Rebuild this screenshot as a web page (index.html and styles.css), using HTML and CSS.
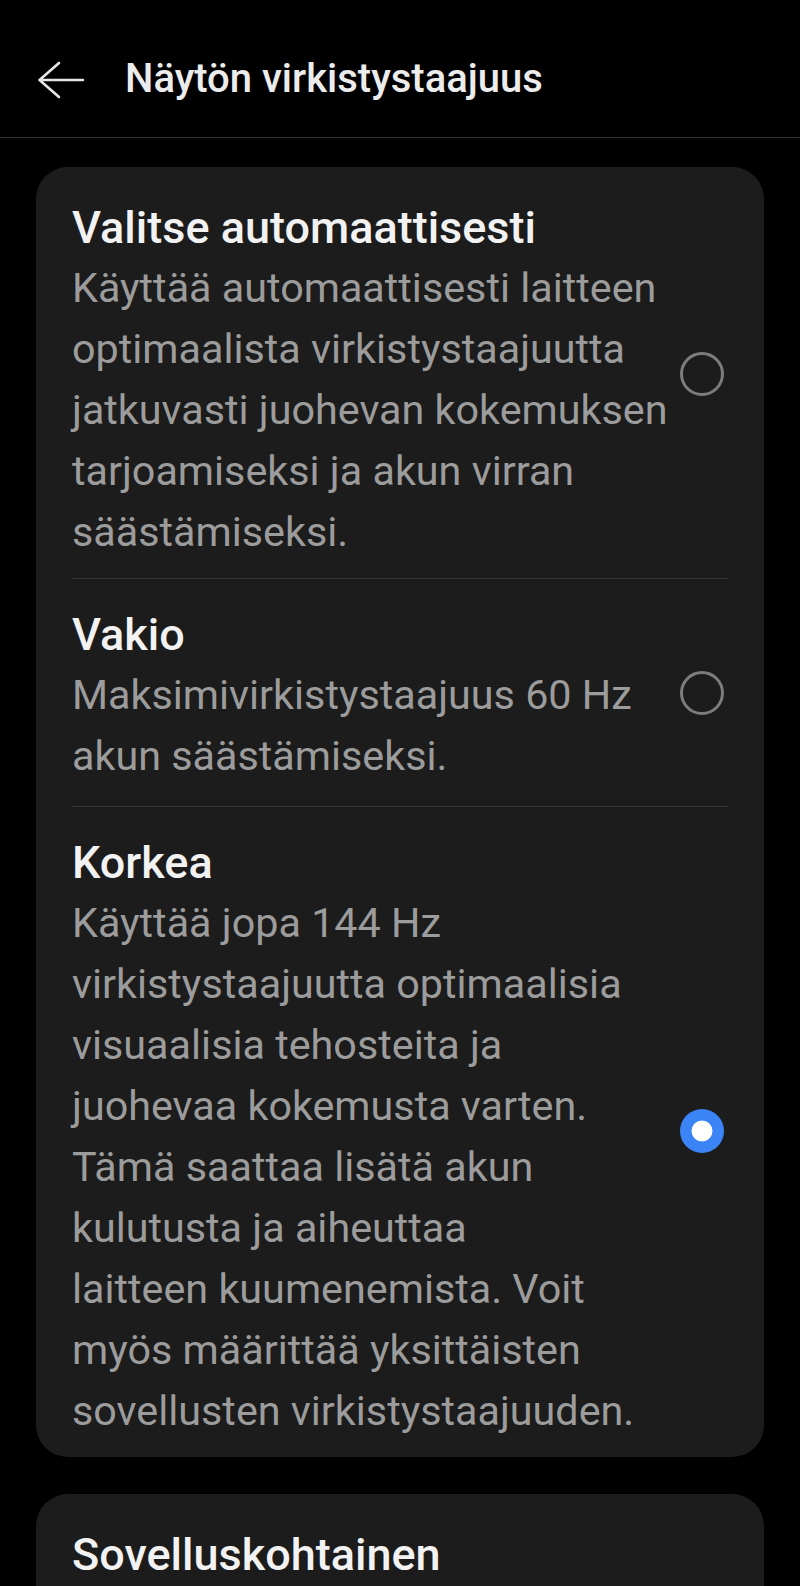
FILE: index.html
```html
<!DOCTYPE html>
<html lang="fi">
<head>
<meta charset="utf-8">
<title>Näytön virkistystaajuus</title>
<link rel="stylesheet" href="styles.css">
</head>
<body>
<header class="appbar">
  <svg class="back" width="48" height="38" viewBox="0 0 48 38" aria-hidden="true">
    <path d="M46 19H2.5M22 2L2.5 19L22 36" fill="none" stroke="#e6e6e6" stroke-width="2.6" stroke-linecap="round" stroke-linejoin="round"/>
  </svg>
  <h1 class="appbar-title">Näytön virkistystaajuus</h1>
</header>

<main class="content">
  <section class="card">
    <div class="option">
      <div class="option-text">
        <div class="option-title">Valitse automaattisesti</div>
        <div class="option-desc">Käyttää automaattisesti laitteen<br>optimaalista virkistystaajuutta<br>jatkuvasti juohevan kokemuksen<br>tarjoamiseksi ja akun virran<br>säästämiseksi.</div>
      </div>
      <span class="radio radio-raised"></span>
    </div>
    <div class="option option-short">
      <div class="option-text">
        <div class="option-title">Vakio</div>
        <div class="option-desc">Maksimivirkistystaajuus 60 Hz<br>akun säästämiseksi.</div>
      </div>
      <span class="radio radio-short"></span>
    </div>
    <div class="option">
      <div class="option-text">
        <div class="option-title">Korkea</div>
        <div class="option-desc">Käyttää jopa 144 Hz<br>virkistystaajuutta optimaalisia<br>visuaalisia tehosteita ja<br>juohevaa kokemusta varten.<br>Tämä saattaa lisätä akun<br>kulutusta ja aiheuttaa<br>laitteen kuumenemista. Voit<br>myös määrittää yksittäisten<br>sovellusten virkistystaajuuden.</div>
      </div>
      <span class="radio radio-checked radio-raised"></span>
    </div>
  </section>

  <section class="card card-second">
    <div class="option">
      <div class="option-text">
        <div class="option-title">Sovelluskohtainen</div>
      </div>
    </div>
  </section>
</main>
</body>
</html>
```

FILE: styles.css
```css
* {
  box-sizing: border-box;
}

html, body {
  margin: 0;
  padding: 0;
  background: #000;
}

body {
  font-family: Roboto, "Noto Sans", "Liberation Sans", sans-serif;
  color: #f2f2f2;
  overflow: hidden;
  height: 1586px;
}

.appbar {
  height: 138px;
  display: flex;
  align-items: center;
  padding: 22px 0 0 37px;
  border-bottom: 1px solid #333;
}

.back {
  display: block;
  flex: none;
}

.appbar-title {
  margin: 0 0 0 40px;
  font-size: 40px;
  font-weight: 500;
  line-height: 1.171;
  color: #ececec;
}

.content {
  padding: 29px 36px 0;
}

.card {
  background: #1c1c1c;
  border-radius: 32px;
  padding: 5px 36px 0;
}

.card-second {
  margin-top: 37px;
  padding-bottom: 60px;
}

.option {
  display: flex;
  align-items: center;
  padding: 25px 0 15px;
  border-bottom: 1px solid #343434;
}

.option-short {
  padding-bottom: 19px;
}

.option:last-child {
  border-bottom: none;
}

.option-text {
  flex: 1;
  min-width: 0;
  white-space: nowrap;
}

.option-title {
  font-size: 45px;
  font-weight: 500;
  line-height: 61px;
  color: #f2f2f2;
}

.option-desc {
  font-size: 41.3px;
  font-weight: 400;
  line-height: 61px;
  color: #9c9c9c;
}

.radio {
  flex: none;
  width: 44px;
  height: 44px;
  margin-right: 4px;
  border-radius: 50%;
  border: 3px solid #7c7c7c;
}

.radio-raised {
  margin-bottom: 12px;
}

.radio-short {
  margin-bottom: 6px;
}

.radio-checked {
  border: none;
  background: radial-gradient(circle, #ffffff 0 10px, #3b84f6 10.8px);
}
```
